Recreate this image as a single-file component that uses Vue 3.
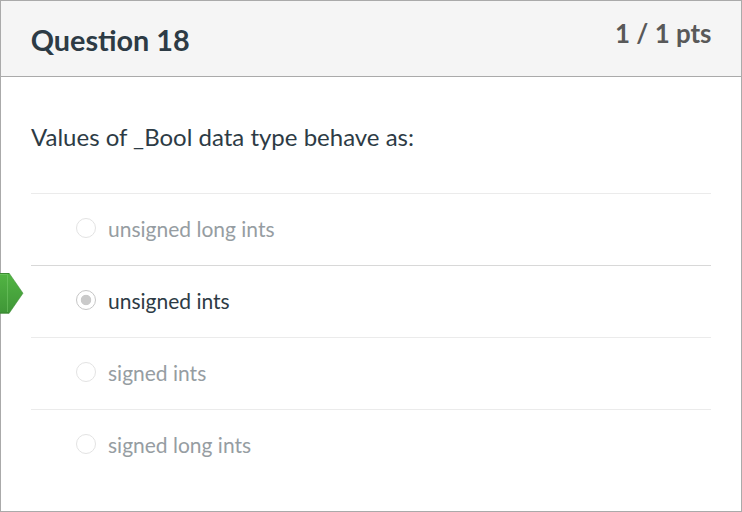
<script setup>
const answers = [
  { text: 'unsigned long ints', selected: false },
  { text: 'unsigned ints', selected: true },
  { text: 'signed ints', selected: false },
  { text: 'signed long ints', selected: false },
]
</script>

<template>
  <section class="question">
    <header class="header">
      <h2 class="name">Question 18</h2>
      <span class="points">1 / 1 pts</span>
    </header>
    <div class="body">
      <p class="prompt">Values of _Bool data type behave as:</p>
      <ul class="answers">
        <li v-for="a in answers" :key="a.text" class="answer" :class="{ selected: a.selected }">
          <svg v-if="a.selected" class="flag" width="24" height="43" viewBox="0 0 24 43" aria-hidden="true">
            <defs>
              <linearGradient id="flag-fill" x1="0" y1="0" x2="0" y2="1">
                <stop offset="0" stop-color="#52b543" />
                <stop offset="1" stop-color="#3f9637" />
              </linearGradient>
            </defs>
            <path d="M0 1H9L23 21.2L9 41.5H0Z" fill="url(#flag-fill)" />
            <path d="M0 1.5H9M0 41H9" fill="none" stroke="#357d2e" stroke-opacity=".75" />
            <path d="M9 1L23 21.2L9 41.5" fill="none" stroke="#3a8a32" stroke-opacity=".5" />
            <path d="M0 2.5H7.5V40" fill="none" stroke="#79cb6d" stroke-opacity=".5" />
          </svg>
          <span class="radio"></span>
          <span class="label">{{ a.text }}</span>
        </li>
      </ul>
    </div>
  </section>
</template>

<style>
body {
  margin: 0;
  background: #fff;
}
</style>

<style scoped>
.question {
  box-sizing: border-box;
  width: 742px;
  height: 512px;
  border: 1px solid #aaa;
  font-family: Lato, 'Liberation Sans', sans-serif;
  color: #2d3b45;
}
.header {
  display: flex;
  justify-content: space-between;
  box-sizing: border-box;
  height: 76px;
  padding: 0 29.5px 0 29.7px;
  border-bottom: 1px solid #aaa;
  background: #f5f5f5;
}
.name {
  margin: 0;
  font-size: 28.8px;
  font-weight: 700;
  line-height: 78px;
}
.points {
  font-size: 25.9px;
  font-weight: 700;
  line-height: 65px;
  color: #595959;
}
.body {
  padding: 0 30px;
}
.prompt {
  margin: 0;
  height: 116px;
  font-size: 24px;
  line-height: 119px;
}
.answers {
  margin: 0;
  padding: 0;
  list-style: none;
}
.answer {
  position: relative;
  display: flex;
  box-sizing: border-box;
  height: 72px;
  padding: 24px 0 0 45px;
  border-top: 1px solid #ebebeb;
  font-size: 21px;
}
.answer.selected {
  border-top-color: #d8d8d8;
}
.flag {
  position: absolute;
  left: -31px;
  top: 6px;
}
.radio {
  box-sizing: border-box;
  width: 20px;
  height: 20px;
  border: 1px solid #e3e3e3;
  border-radius: 50%;
}
.selected .radio {
  border-color: #c6c6c6;
  background: radial-gradient(circle at center, #cacaca 4.8px, transparent 5.6px);
}
.label {
  margin-left: 12px;
  line-height: 22px;
  color: #969da2;
}
.selected .label {
  color: #2d3b45;
}
</style>
